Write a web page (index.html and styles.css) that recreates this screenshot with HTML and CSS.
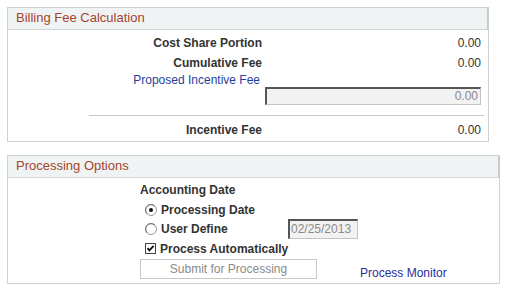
FILE: index.html
```html
<!DOCTYPE html>
<html>
<head>
<meta charset="utf-8">
<link rel="stylesheet" href="styles.css">
</head>
<body>
<div class="page">
  <section class="box box-fee">
    <div class="box-head">Billing Fee Calculation</div>
    <div class="fee-body">
      <div class="row r1"><span class="lbl">Cost Share Portion</span><span class="val">0.00</span></div>
      <div class="row r2"><span class="lbl">Cumulative Fee</span><span class="val">0.00</span></div>
      <div class="row r3"><span class="lbl link">Proposed Incentive Fee</span></div>
      <div class="row r4"><span class="spacer"></span><span class="field">0.00</span></div>
      <div class="rule"></div>
      <div class="row r5"><span class="lbl">Incentive Fee</span><span class="val">0.00</span></div>
    </div>
  </section>

  <section class="box box-proc">
    <div class="box-head">Processing Options</div>
    <div class="proc-body">
      <div class="prow title">Accounting Date</div>
      <div class="prow opt">
        <svg class="radio" width="12" height="12" viewBox="0 0 12 12"><circle cx="6" cy="6" r="5.5" fill="#fff" stroke="#9a9a9a"/><path d="M2.2 9.8A5.3 5.3 0 0 1 9.8 2.2" fill="none" stroke="#6e6e6e"/><circle cx="6" cy="6" r="2" fill="#111"/></svg>
        <span>Processing Date</span>
      </div>
      <div class="prow opt">
        <svg class="radio" width="12" height="12" viewBox="0 0 12 12"><circle cx="6" cy="6" r="5.5" fill="#fff" stroke="#9a9a9a"/><path d="M2.2 9.8A5.3 5.3 0 0 1 9.8 2.2" fill="none" stroke="#6e6e6e"/></svg>
        <span class="udef">User Define</span>
        <span class="date">02/25/2013</span>
      </div>
      <div class="prow opt">
        <svg class="check" width="11" height="11" viewBox="0 0 11 11"><rect x="0.5" y="0.5" width="10" height="10" fill="#fff" stroke="#444"/><path d="M2.5 5.2 L4.4 7.4 L8.6 2.8" fill="none" stroke="#111" stroke-width="1.8"/></svg>
        <span>Process Automatically</span>
      </div>
      <div class="prow actions">
        <span class="btn">Submit for Processing</span>
        <span class="monitor">Process Monitor</span>
      </div>
    </div>
  </section>
</div>
</body>
</html>
```
FILE: styles.css
```css
html, body {
  margin: 0;
  padding: 0;
  background: #fff;
}
body {
  font-family: "Liberation Sans", Arial, sans-serif;
  font-size: 12px;
  color: #333;
}
.page {
  padding: 7px 0 0 7px;
  display: flex;
  flex-direction: column;
  gap: 13px;
  align-items: flex-start;
}
.box {
  border: 1px solid #cfd3d6;
  box-sizing: border-box;
}
.box-fee { width: 482px; }
.box-proc { width: 493px; }
.box-head {
  height: 21px;
  line-height: 20px;
  background: #f0f3f4;
  border-bottom: 1px solid #cfd3d6;
  border-right: 2px solid #c8cbce;
  margin-right: -1px;
  padding-left: 8px;
  font-size: 13px;
  color: #a4452c;
}
.fee-body {
  padding: 3px 7px 2px 0;
  display: flex;
  flex-direction: column;
}
.row {
  display: flex;
  align-items: center;
}
.r1, .r2 { height: 20px; }
.r3 { height: 14px; }
.r4 { height: 18px; }
.r5 { height: 18px; }
.lbl {
  width: 254px;
  text-align: right;
  font-weight: bold;
  flex: none;
}
.lbl.link {
  font-weight: normal;
  color: #1f3f9e;
  width: 252px;
}
.val {
  flex: 1;
  text-align: right;
}
.spacer { width: 257px; flex: none; }
.field {
  flex: none;
  width: 216px;
  height: 18px;
  box-sizing: border-box;
  border: 1px solid #c4c4c4;
  border-top: 2px solid #555;
  border-left: 2px solid #555;
  background: #f2f2f2;
  color: #8a8a8a;
  text-align: right;
  line-height: 15px;
  padding-right: 2px;
}
.rule {
  height: 1px;
  background: #c8c8c8;
  margin: 10px -3px 5px 81px;
}
.proc-body {
  padding: 2px 0 4px 132px;
  display: flex;
  flex-direction: column;
}
.prow {
  display: flex;
  align-items: center;
  font-weight: bold;
}
.title { height: 20px; }
.opt { height: 19.5px; padding-left: 5px; gap: 4px; }
.radio, .check { flex: none; }
.udef { width: 124px; }
.date {
  font-weight: normal;
  color: #8a8a8a;
  width: 70px;
  height: 20px;
  box-sizing: border-box;
  border: 1px solid #c4c4c4;
  border-top: 2px solid #555;
  border-left: 2px solid #555;
  background: #f2f2f2;
  line-height: 16px;
  padding-left: 1px;
  margin-left: -1px;
}
.actions {
  margin-top: 0;
  font-weight: normal;
}
.btn {
  width: 177px;
  height: 20px;
  box-sizing: border-box;
  border: 1px solid #c8c8c8;
  background: #fff;
  color: #8a8a8a;
  text-align: center;
  line-height: 18px;
}
.monitor {
  margin-left: 43px;
  align-self: flex-end;
  line-height: 14px;
  margin-bottom: -1px;
  color: #2a2d99;
}
```
